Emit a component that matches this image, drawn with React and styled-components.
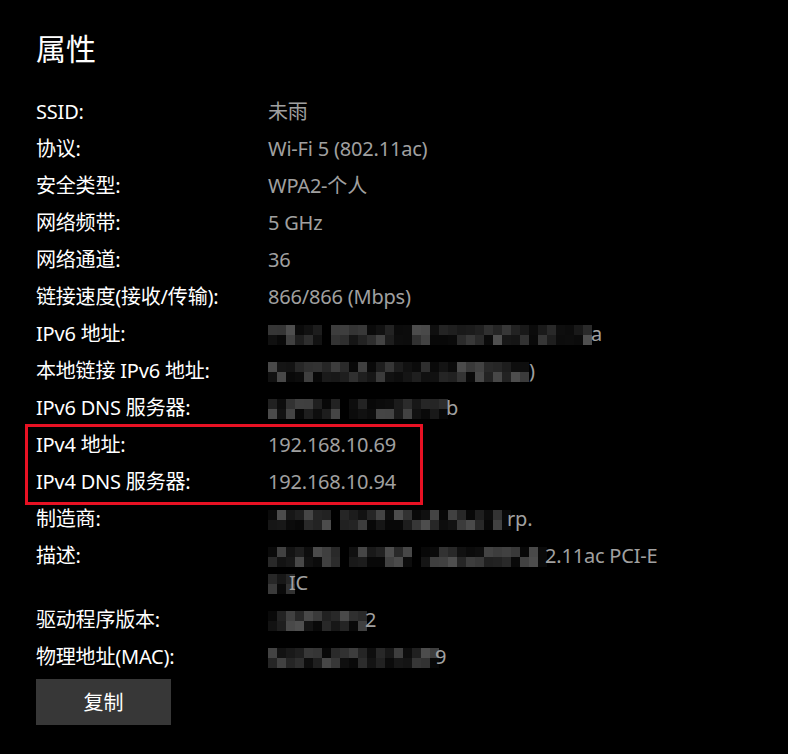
import React from 'react';
import styled, { createGlobalStyle } from 'styled-components';

const GlobalStyle = createGlobalStyle`
  html, body { margin: 0; padding: 0; background: #000; }
  body { font-family: "Noto Sans", "Noto Sans CJK SC", sans-serif; }
`;

const Page = styled.div`
  width: 788px;
  height: 754px;
  box-sizing: border-box;
  padding: 27px 0 0 36px;
  background: #000;
  color: #fff;
  display: flex;
  flex-direction: column;
  overflow: hidden;
`;

const Title = styled.h1`
  margin: 0;
  font-size: 30px;
  line-height: 40px;
  font-weight: 400;
  font-family: "Noto Sans CJK SC", sans-serif;
`;

const List = styled.div`
  display: flex;
  flex-direction: column;
  gap: 10px;
  margin-top: 31px;
`;

const Row = styled.div`
  display: grid;
  grid-template-columns: 232px auto;
  font-size: 20px;
  line-height: 27px;
  letter-spacing: -0.2px;
`;

const Label = styled.div`
  color: #fff;
  white-space: nowrap;
`;

const Value = styled.div`
  color: #a0a0a0;
  display: flex;
  flex-direction: column;
`;

const Line = styled.div`
  display: flex;
  align-items: center;
  height: 27px;
  white-space: nowrap;
`;

const Tail = styled.span`
  margin-left: ${(p) => p.$shift || 0}px;
`;

const Highlight = styled.div`
  position: relative;
  display: flex;
  flex-direction: column;
  gap: 10px;
  &::before {
    content: '';
    position: absolute;
    left: -11px;
    top: -7.5px;
    width: 398px;
    height: 81px;
    border: 3px solid #e81123;
    box-sizing: border-box;
    pointer-events: none;
  }
`;

const CopyButton = styled.button`
  align-self: flex-start;
  margin-top: 8.5px;
  width: 135px;
  height: 46px;
  padding: 0;
  border: none;
  background: #373737;
  color: #fff;
  font-size: 20px;
  font-family: "Noto Sans CJK SC", sans-serif;
`;

function rng(seed) {
  let s = (seed * 2654435761) >>> 0;
  return () => {
    s ^= s << 13; s >>>= 0;
    s ^= s >>> 17;
    s ^= s << 5; s >>>= 0;
    return (s % 10000) / 10000;
  };
}

function Mosaic({ seed, cols, rows = 2, gapsAt = [] }) {
  const r = rng(seed);
  const size = 9;
  const h = 10;
  const rects = [];
  for (let y = 0; y < rows; y++) {
    for (let x = 0; x < cols; x++) {
      const v = r();
      if (gapsAt.includes(x)) continue;
      const g = Math.round(8 + Math.pow(v, 1.6) * 72);
      rects.push(
        <rect key={`${x}-${y}`} x={x * size} y={y * h} width={size} height={h} fill={`rgb(${g},${g},${g})`} />
      );
    }
  }
  return (
    <svg
      width={cols * size}
      height={rows * h}
      viewBox={`0 0 ${cols * size} ${rows * h}`}
      shapeRendering="crispEdges"
      style={{ display: 'block', marginTop: 2 }}
    >
      {rects}
    </svg>
  );
}

const Item = ({ label, children }) => (
  <Row>
    <Label>{label}</Label>
    <Value>{children}</Value>
  </Row>
);

export default function App() {
  return (
    <>
      <GlobalStyle />
      <Page>
        <Title>属性</Title>
        <List>
          <Item label="SSID:"><Line>未雨</Line></Item>
          <Item label="协议:"><Line>Wi-Fi 5 (802.11ac)</Line></Item>
          <Item label="安全类型:"><Line>WPA2-个人</Line></Item>
          <Item label="网络频带:"><Line>5 GHz</Line></Item>
          <Item label="网络通道:"><Line>36</Line></Item>
          <Item label="链接速度(接收/传输):"><Line>866/866 (Mbps)</Line></Item>
          <Item label="IPv6 地址:">
            <Line><Mosaic seed={3} cols={36} gapsAt={[6]} /><Tail $shift={-1}>a</Tail></Line>
          </Item>
          <Item label="本地链接 IPv6 地址:">
            <Line><Mosaic seed={7} cols={29} /><Tail $shift={0}>)</Tail></Line>
          </Item>
          <Item label="IPv6 DNS 服务器:">
            <Line><Mosaic seed={11} cols={20} gapsAt={[8]} /><Tail $shift={-2}>b</Tail></Line>
          </Item>
          <Highlight>
            <Item label="IPv4 地址:"><Line>192.168.10.69</Line></Item>
            <Item label="IPv4 DNS 服务器:"><Line>192.168.10.94</Line></Item>
          </Highlight>
          <Item label="制造商:">
            <Line><Mosaic seed={17} cols={27} gapsAt={[7]} /><Tail $shift={-4}>rp.</Tail></Line>
          </Item>
          <Item label="描述:">
            <Line><Mosaic seed={23} cols={31} gapsAt={[8, 16]} /><Tail $shift={-2}>2.11ac PCI-E</Tail></Line>
            <Line><Mosaic seed={29} cols={3} /><Tail $shift={-6}>IC</Tail></Line>
          </Item>
          <Item label="驱动程序版本:">
            <Line><Mosaic seed={31} cols={11} /><Tail $shift={-2}>2</Tail></Line>
          </Item>
          <Item label="物理地址(MAC):">
            <Line><Mosaic seed={37} cols={19} /><Tail $shift={-4}>9</Tail></Line>
          </Item>
        </List>
        <CopyButton>复制</CopyButton>
      </Page>
    </>
  );
}
